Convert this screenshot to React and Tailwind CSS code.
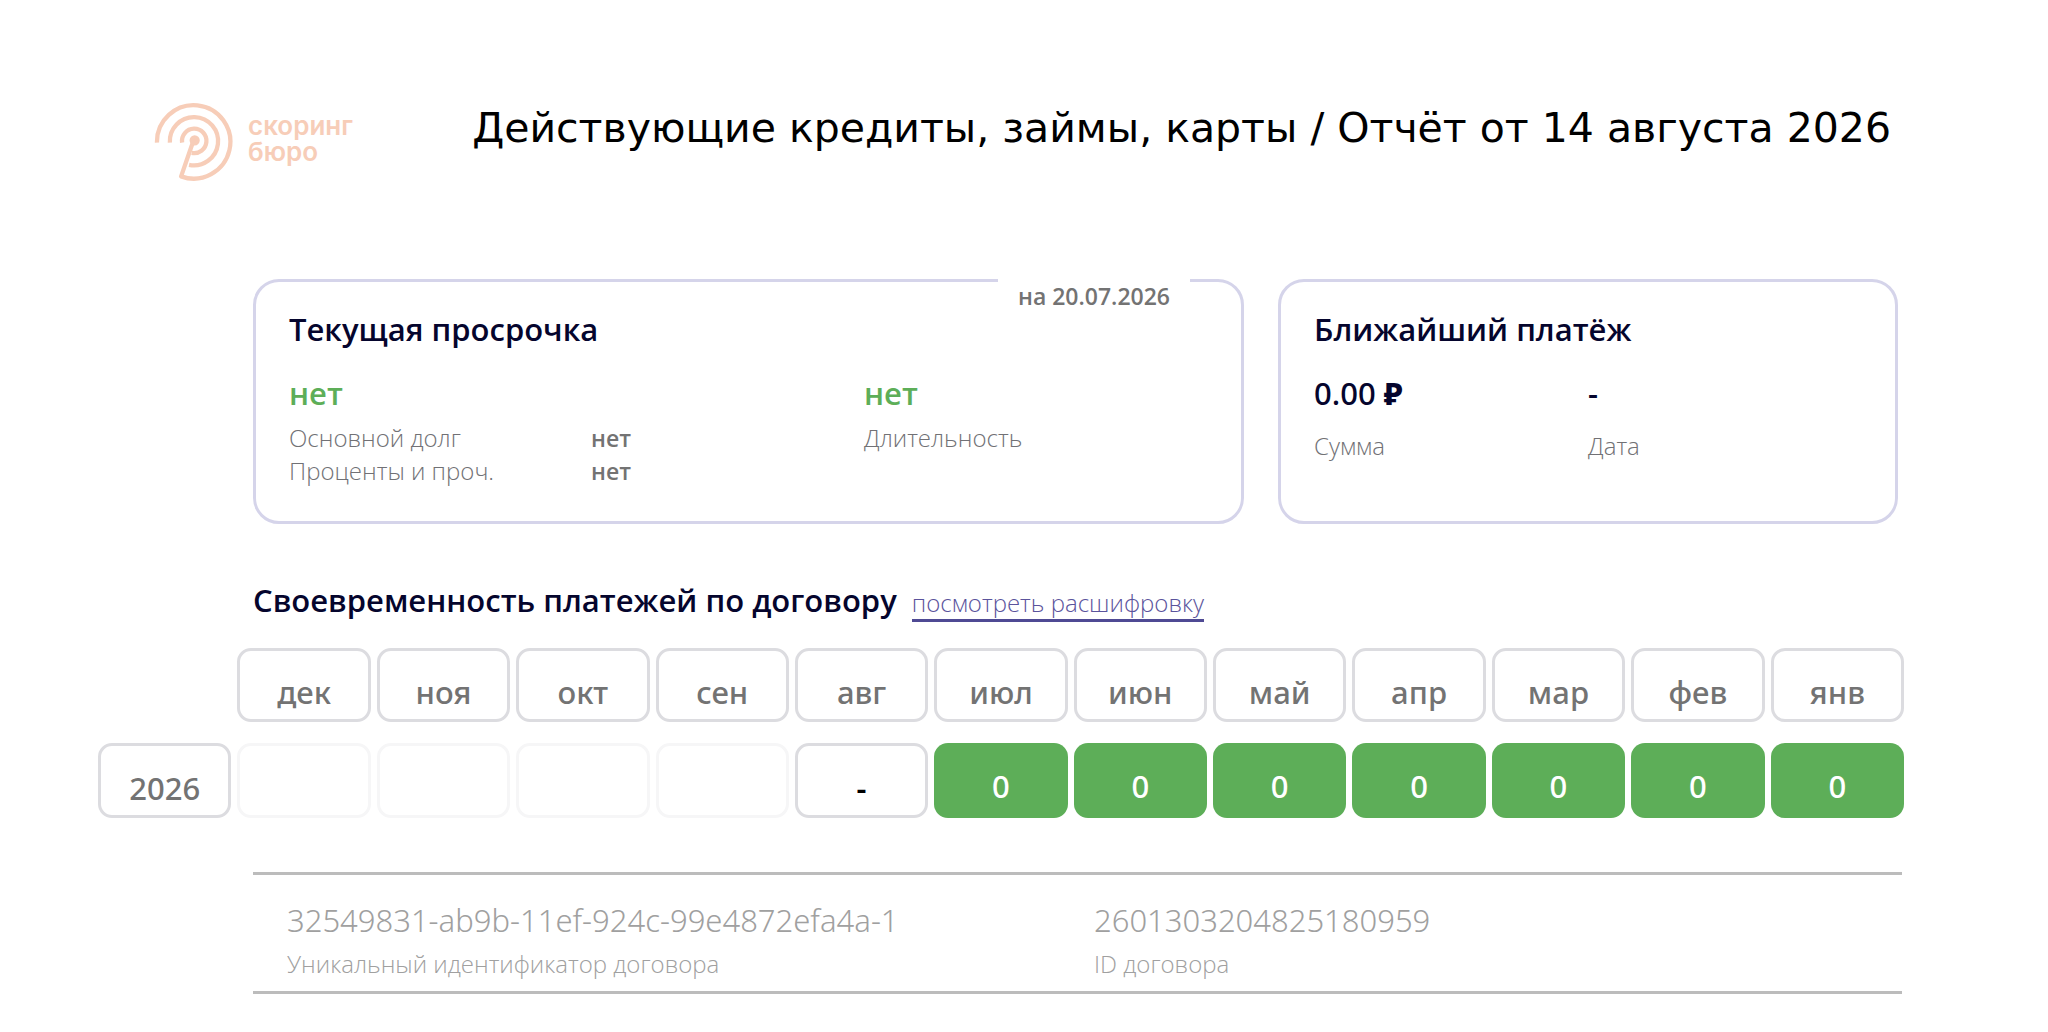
import React from "react";

const months = [
  { name: "дек", value: "", status: "empty" },
  { name: "ноя", value: "", status: "empty" },
  { name: "окт", value: "", status: "empty" },
  { name: "сен", value: "", status: "empty" },
  { name: "авг", value: "-", status: "none" },
  { name: "июл", value: "0", status: "ok" },
  { name: "июн", value: "0", status: "ok" },
  { name: "май", value: "0", status: "ok" },
  { name: "апр", value: "0", status: "ok" },
  { name: "мар", value: "0", status: "ok" },
  { name: "фев", value: "0", status: "ok" },
  { name: "янв", value: "0", status: "ok" },
];

const cellStyles = {
  empty: "border-[3px] border-[#f6f6f7]",
  none: "border-[3px] border-[#dcdce0] pt-3.5 font-semibold text-black",
  ok: "bg-[#5dae58] pt-2.5 font-medium text-white",
};

function Logo() {
  return (
    <a href="#" className="flex items-center gap-3.5 text-[#f7cdb8]">
      <svg viewBox="40 34 242 242" className="size-20" fill="none" stroke="currentColor" strokeWidth="13">
        <path d="M49 160A111 111 0 1 1 122 262L160 152" strokeLinejoin="round" />
        <path d="M88 160A73 73 0 1 1 146 227" />
        <path d="M125 160A37 37 0 1 1 154 191" />
        <circle cx="163" cy="153" r="9" fill="currentColor" />
      </svg>
      <span className="flex flex-col pb-1 font-[Inter,sans-serif] text-[26px] leading-[26px] font-semibold">
        <span>скоринг</span>
        <span>бюро</span>
      </span>
    </a>
  );
}

function OverdueCard() {
  return (
    <section className="relative rounded-[26px] border-[3px] border-[#d5d4ea] px-[33px] pt-[27px] pb-[34px]">
      <p className="absolute -top-1.5 right-[51px] bg-white px-5 pt-1 text-[23px] leading-8 font-semibold text-[#737373]">
        на 20.07.2026
      </p>
      <h2 className="text-[31px] leading-10 font-semibold text-[#05052d]">Текущая просрочка</h2>
      <div className="mt-6 grid grid-cols-[575fr_344fr]">
        <div>
          <p className="text-[31px] leading-10 font-semibold text-[#5dae58]">нет</p>
          <dl className="mt-2 grid grid-cols-[302fr_273fr] items-baseline">
            <dt className="text-2xl leading-[33px] font-light text-[#717175]">Основной долг</dt>
            <dd className="text-[23px] leading-8 font-semibold text-[#737373]">нет</dd>
            <dt className="text-2xl leading-[33px] font-light text-[#717175]">Проценты и проч.</dt>
            <dd className="text-[23px] leading-8 font-semibold text-[#737373]">нет</dd>
          </dl>
        </div>
        <div>
          <p className="text-[31px] leading-10 font-semibold text-[#5dae58]">нет</p>
          <p className="mt-2 text-2xl leading-[33px] font-light text-[#717175]">Длительность</p>
        </div>
      </div>
    </section>
  );
}

function PaymentCard() {
  return (
    <section className="rounded-[26px] border-[3px] border-[#d5d4ea] px-[33px] pt-[27px] pb-[34px]">
      <h2 className="text-[31px] leading-10 font-semibold text-[#05052d]">Ближайший платёж</h2>
      <div className="mt-6 grid grid-cols-2">
        <div>
          <p className="font-['Noto_Sans','Open_Sans',sans-serif] text-[31px] leading-10 font-medium text-[#05052d]">
            0.00 <span className="font-extrabold">₽</span>
          </p>
          <p className="mt-4 text-2xl leading-[33px] font-light text-[#717175]">Сумма</p>
        </div>
        <div>
          <p className="text-[31px] leading-10 font-semibold text-[#05052d]">-</p>
          <p className="mt-4 text-2xl leading-[33px] font-light text-[#717175]">Дата</p>
        </div>
      </div>
    </section>
  );
}

function PaymentTable() {
  return (
    <table className="w-full table-fixed border-separate border-spacing-x-1.5 border-spacing-y-[21px] text-center font-['Noto_Sans','Open_Sans',sans-serif] text-[31px] leading-10">
      <thead>
        <tr>
          <td></td>
          {months.map((month) => (
            <th
              key={month.name}
              scope="col"
              className="h-[74px] rounded-[14px] border-[3px] border-[#dcdce0] pt-3.5 font-medium text-[#737373]"
            >
              {month.name}
            </th>
          ))}
        </tr>
      </thead>
      <tbody>
        <tr>
          <th
            scope="row"
            className="h-[75px] rounded-[14px] border-[3px] border-[#dcdce0] pt-3.5 font-medium text-[#737373]"
          >
            2026
          </th>
          {months.map((month) => (
            <td key={month.name} className={`h-[75px] rounded-[14px] ${cellStyles[month.status]}`}>
              {month.value}
            </td>
          ))}
        </tr>
      </tbody>
    </table>
  );
}

function App() {
  return (
    <div className="min-h-screen bg-white pb-9 font-['Open_Sans','Noto_Sans',sans-serif]">
      <header className="flex items-center justify-between pt-[101px] pr-[157px] pl-[154px]">
        <Logo />
        <h1 className="pb-[26px] font-['DejaVu_Sans',sans-serif] text-[41px] leading-[52px] text-black">
          Действующие кредиты, займы, карты / Отчёт от 14 августа 2026
        </h1>
      </header>

      <main>
        <div className="mt-[98px] mr-[150px] ml-[253px] grid grid-cols-[991fr_620fr] gap-[34px]">
          <OverdueCard />
          <PaymentCard />
        </div>

        <div className="mt-14 ml-[253px] flex items-baseline gap-[15px]">
          <h2 className="text-[31px] leading-10 font-semibold text-[#05052d]">
            Своевременность платежей по договору
          </h2>
          <a href="#" className="border-b-[3px] border-[#4f4a94] text-2xl leading-8 font-light text-[#5a539c]">
            посмотреть расшифровку
          </a>
        </div>

        <div className="mt-[5px] mr-[138px] ml-[92px]">
          <PaymentTable />
        </div>

        <dl className="mt-[33px] mr-[146px] ml-[253px] grid grid-cols-[807fr_774fr] border-y-[3px] border-[#bcbcbc] px-[34px] pt-[25px] pb-[11px] font-light text-[#a0a0a0]">
          <div className="flex flex-col-reverse gap-[7px]">
            <dt className="text-2xl leading-[33px]">Уникальный идентификатор договора</dt>
            <dd className="font-['Noto_Sans','Open_Sans',sans-serif] text-[31px] leading-10">
              32549831-ab9b-11ef-924c-99e4872efa4a-1
            </dd>
          </div>
          <div className="flex flex-col-reverse gap-[7px]">
            <dt className="text-2xl leading-[33px]">ID договора</dt>
            <dd className="font-['Noto_Sans','Open_Sans',sans-serif] text-[31px] leading-10">2601303204825180959</dd>
          </div>
        </dl>
      </main>
    </div>
  );
}

export default App;
